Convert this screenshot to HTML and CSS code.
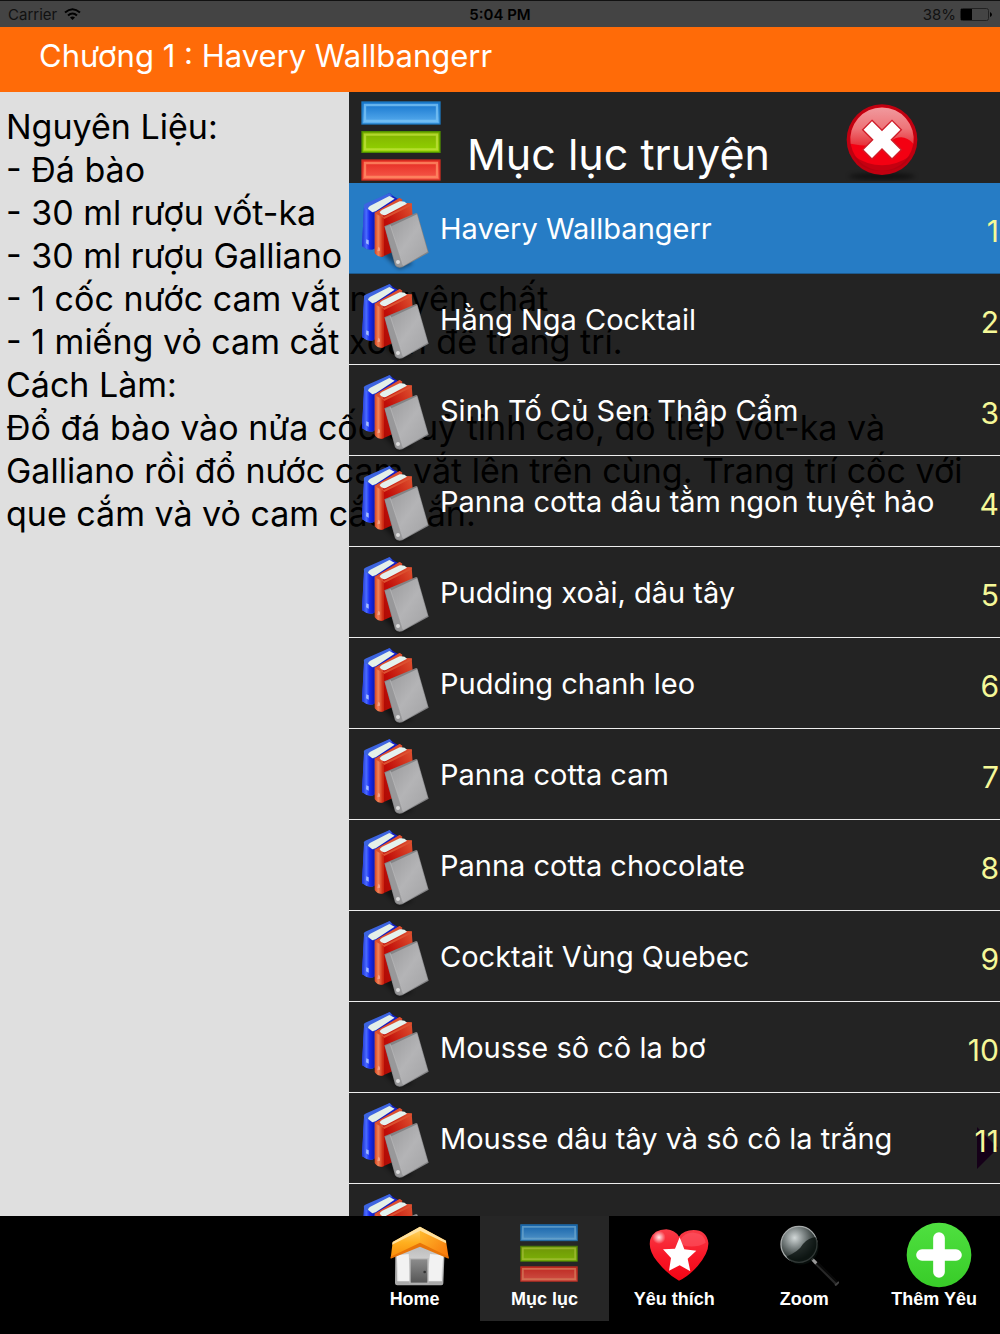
FILE: index.html
```html
<!DOCTYPE html>
<html lang="vi">
<head>
<meta charset="utf-8">
<meta name="viewport" content="width=device-width, initial-scale=1">
<title>Chương 1 : Havery Wallbangerr</title>
<link rel="stylesheet" href="styles.css">
</head>
<body>
<svg class="defs" aria-hidden="true">
  <defs>
    <linearGradient id="blueSpine"><stop offset="0" stop-color="#1c2fd0"/><stop offset=".35" stop-color="#4a6cff"/><stop offset=".6" stop-color="#1a2df0"/><stop offset="1" stop-color="#0c18b8"/></linearGradient>
    <linearGradient id="redSpine"><stop offset="0" stop-color="#d8401c"/><stop offset=".4" stop-color="#f08458"/><stop offset="1" stop-color="#cc1c08"/></linearGradient>
    <linearGradient id="redCover" x1="0" y1="1" x2="1" y2="0"><stop offset="0" stop-color="#a80c04"/><stop offset=".45" stop-color="#c00c08"/><stop offset="1" stop-color="#e25a34"/></linearGradient>
    <linearGradient id="greyCover" x1="0" y1="0" x2="1" y2="1"><stop offset="0" stop-color="#9a9a9c"/><stop offset=".5" stop-color="#b4b4b6"/><stop offset="1" stop-color="#a2a2a4"/></linearGradient>
    <linearGradient id="barBlue" x2="0" y2="1"><stop offset="0" stop-color="#1272cc"/><stop offset="1" stop-color="#5cb0f0"/></linearGradient>
    <linearGradient id="barGreen" x2="0" y2="1"><stop offset="0" stop-color="#80b000"/><stop offset="1" stop-color="#92d400"/></linearGradient>
    <linearGradient id="barRed" x2="0" y2="1"><stop offset="0" stop-color="#e42820"/><stop offset="1" stop-color="#f85c4c"/></linearGradient>
    <linearGradient id="gloss" x2="0" y2="1"><stop offset="0" stop-color="#f09a9e"/><stop offset=".55" stop-color="#ee7478"/><stop offset="1" stop-color="#e63038"/></linearGradient>
    <linearGradient id="roof" x2="0" y2="1"><stop offset="0" stop-color="#ffd878"/><stop offset=".5" stop-color="#ffb020"/><stop offset="1" stop-color="#f88a08"/></linearGradient>
    <linearGradient id="roofRight" x2="1" y2="1"><stop offset="0" stop-color="#ffc030"/><stop offset="1" stop-color="#f87408"/></linearGradient>
    <linearGradient id="wall" x2="0" y2="1"><stop offset="0" stop-color="#b4b4b4"/><stop offset="1" stop-color="#ececec"/></linearGradient>
    <linearGradient id="door" x2="0" y2="1"><stop offset="0" stop-color="#8c8c8c"/><stop offset="1" stop-color="#565656"/></linearGradient>
    <linearGradient id="heart" x2="0" y2="1"><stop offset="0" stop-color="#f83c48"/><stop offset=".5" stop-color="#f81828"/><stop offset="1" stop-color="#f40414"/></linearGradient>
    <radialGradient id="shine"><stop offset="0" stop-color="#fff" stop-opacity=".9"/><stop offset="1" stop-color="#fff" stop-opacity="0"/></radialGradient>
    <radialGradient id="lens" cx=".38" cy=".32" r=".62"><stop offset="0" stop-color="#d2d8d8"/><stop offset=".45" stop-color="#7c8484"/><stop offset="1" stop-color="#1c2422"/></radialGradient>
    <linearGradient id="plus" x2="0" y2="1"><stop offset="0" stop-color="#4fe040"/><stop offset="1" stop-color="#38cc28"/></linearGradient>
    <filter id="soft" x="-50%" y="-50%" width="200%" height="200%"><feGaussianBlur stdDeviation="6"/></filter>
  </defs>
  <symbol id="books" viewBox="0 9 273 273">
    <path d="M85 205L112 232L150 268L190 252L150 200Z" fill="#000" opacity=".45" filter="url(#soft)"/>
    <path d="M45 80L122 39L131 47L156 62L110 140L76 206Q58 214 39 198Z" fill="#1420c4"/>
    <path d="M45 80Q42 74 52 70L122 39L130 49L60 84L76 97V206Q58 214 39 198Z" fill="#3c64e0"/>
    <path d="M46 84L76 98V206Q58 214 39 198Z" fill="url(#blueSpine)"/>
    <path d="M57 86Q58 80 64 77L121 48L137 56L80 94L70 97Z" fill="#e4f0e8"/>
    <path d="M52 178L59 181V194L51 190Z" fill="#a4bcff"/>
    <path d="M78 98L152 54L160 59L158 68L188 70L192 122L140 212L98 231L78 220Z" fill="url(#redCover)"/>
    <path d="M77 98L152 54L160 60L96 95L104 111L188 70L189 76L104 118V229L78 219Z" fill="#dc5030"/>
    <path d="M78 100L104 114V228Q90 236 77 219Z" fill="url(#redSpine)"/>
    <path d="M92 97Q94 92 100 89L152 64Q166 62 174 71L112 104Q98 110 92 97Z" fill="#e4f2ee"/>
    <path d="M88 200Q94 202 93 212L85 214Z" fill="#f4a488"/>
    <path d="M106 139L201 99Q205 99 206 103L239 218L160 262Q144 266 138 256Z" fill="#848486"/>
    <path d="M124 140L204 103L236 215L163 258Z" fill="url(#greyCover)"/>
    <path d="M108 141L124 134L162 258Q146 264 140 254Z" fill="#98989a"/>
    <path d="M124 136L162 256" stroke="#bcbcbe" stroke-width="2" fill="none"/>
    <circle cx="147" cy="246" r="6" fill="#dcdcdc"/>
  </symbol>
  <symbol id="bars" viewBox="0 0 240 240">
    <g stroke-width="4">
      <rect x="3" y="3" width="234" height="66" fill="url(#barBlue)" stroke="#1c78c0"/>
      <rect x="3" y="92" width="234" height="62" fill="url(#barGreen)" stroke="#509000"/>
      <rect x="3" y="177" width="234" height="60" fill="url(#barRed)" stroke="#cc2c20"/>
    </g>
    <g fill="none" stroke-width="7">
      <path d="M12 12H228V60H12Z" stroke="#78c2f4" opacity=".8"/>
      <path d="M12 101H228V145H12Z" stroke="#c4e440" opacity=".7"/>
      <path d="M12 186H228V228H12Z" stroke="#ff8c64" opacity=".8"/>
    </g>
  </symbol>
</svg>

<div class="status">
  <span class="carrier">Carrier
    <svg width="17" height="12" viewBox="0 0 17 12"><g fill="none" stroke="#000" stroke-width="2"><path d="M1 4.500Q8.500 -2 16 4.500"/><path d="M4 7.500Q8.500 3.500 13 7.500"/></g><path d="M6 9.500Q8.500 7.500 11 9.500L8.500 12Z"/></svg>
  </span>
  <time class="clock">5:04 PM</time>
  <span class="battery">38%
    <svg width="32" height="13" viewBox="0 0 32 13"><rect x=".5" y=".5" width="28" height="12" rx="2" fill="none" stroke="#222"/><path d="M1 1H12V12H1ZM30 4Q32 5 32 6.500T30 9Z"/></svg>
  </span>
</div>

<header class="titlebar"><h1>Chương 1 : Havery Wallbangerr</h1></header>

<main class="stage">
  <article class="recipe">
    <p>Nguyên Liệu:<br>- Đá bào<br>- 30 ml rượu vốt-ka<br>- 30 ml rượu Galliano<br>- 1 cốc nước cam vắt nguyên chất<br>- 1 miếng vỏ cam cắt xoắn để trang trí.</p>
    <p>Cách Làm:<br>Đổ đá bào vào nửa cốc thuỷ tinh cao, đổ tiếp vốt-ka và<br>Galliano rồi đổ nước cam vắt lên trên cùng. Trang trí cốc với<br>que cắm và vỏ cam cắt xoắn.</p>
  </article>
  <button class="next" type="button"><svg width="21" height="42" viewBox="0 0 21 42"><path d="M0 0L21 21L0 42Z" fill="#85009a"/></svg></button>

  <aside class="panel">
    <div class="panel-head">
      <svg class="panel-icon"><use href="#bars"/></svg>
      <h2>Mục lục truyện</h2>
      <button class="close" type="button">
        <svg width="80" height="80" viewBox="0 0 240 240">
          <ellipse cx="120" cy="226" rx="100" ry="10" fill="#000" opacity=".5" filter="url(#soft)"/>
          <circle cx="120" cy="116" r="106" fill="#c00010"/>
          <circle cx="120" cy="114" r="95" fill="#f40012"/>
          <path d="M26 128A95 95 0 1 1 214 128Q190 100 160 112Q110 146 26 128Z" fill="url(#gloss)"/>
          <path d="M34 164Q120 222 206 164Q182 210 120 210T34 164Z" fill="#b00010" opacity=".7"/>
          <path d="M90 58L120 88L150 58L178 86L148 116L178 146L150 174L120 144L90 174L62 146L92 116L62 86Z" fill="#fff" stroke="#d01c28" stroke-width="4"/>
        </svg>
      </button>
    </div>
    <ol class="chapters">
      <li class="current"><a href="#1"><svg><use href="#books"/></svg><span class="name">Havery Wallbangerr</span><span class="num">1</span></a></li>
      <li><a href="#2"><svg><use href="#books"/></svg><span class="name">Hằng Nga Cocktail</span><span class="num">2</span></a></li>
      <li><a href="#3"><svg><use href="#books"/></svg><span class="name">Sinh Tố Củ Sen Thập Cẩm</span><span class="num">3</span></a></li>
      <li><a href="#4"><svg><use href="#books"/></svg><span class="name">Panna cotta dâu tằm ngon tuyệt hảo</span><span class="num">4</span></a></li>
      <li><a href="#5"><svg><use href="#books"/></svg><span class="name">Pudding xoài, dâu tây</span><span class="num">5</span></a></li>
      <li><a href="#6"><svg><use href="#books"/></svg><span class="name">Pudding chanh leo</span><span class="num">6</span></a></li>
      <li><a href="#7"><svg><use href="#books"/></svg><span class="name">Panna cotta cam</span><span class="num">7</span></a></li>
      <li><a href="#8"><svg><use href="#books"/></svg><span class="name">Panna cotta chocolate</span><span class="num">8</span></a></li>
      <li><a href="#9"><svg><use href="#books"/></svg><span class="name">Cocktait Vùng Quebec</span><span class="num">9</span></a></li>
      <li><a href="#10"><svg><use href="#books"/></svg><span class="name">Mousse sô cô la bơ</span><span class="num">10</span></a></li>
      <li><a href="#11"><svg><use href="#books"/></svg><span class="name">Mousse dâu tây và sô cô la trắng</span><span class="num">11</span></a></li>
      <li><a href="#12"><svg><use href="#books"/></svg></a></li>
    </ol>
  </aside>
</main>

<nav class="tabbar">
  <button class="tab" type="button">
    <svg width="60" height="66" viewBox="0 0 180 198">
      <path d="M16 84L92 50L164 84L160 184Q160 190 154 190H22Q15 190 15 184Z" fill="#aaa"/>
      <path d="M18 88L92 56L162 88L156 178H22Z" fill="url(#wall)"/>
      <path d="M20 100L56 96L62 176H26ZM160 100L120 96L112 176H152Z" fill="#f2f2f2"/>
      <rect x="58" y="108" width="58" height="76" fill="#bdbdbd"/>
      <rect x="62" y="112" width="50" height="70" fill="url(#door)"/>
      <circle cx="104" cy="150" r="4" fill="#333"/>
      <path d="M90 14L8 60L2 108L90 70Z" fill="url(#roof)"/>
      <path d="M90 14L168 56L176 108L90 70Z" fill="url(#roofRight)"/>
      <path d="M2 104L90 62L176 104V110L90 74L2 110Z" fill="#e87408"/>
      <path d="M90 14L8 60L6 68L90 26L168 64V56Z" fill="#ffe2a0"/>
    </svg>
    <span>Home</span>
  </button>
  <button class="tab active" type="button">
    <svg class="tab-bars" width="60" height="58"><use href="#bars"/></svg>
    <span>Mục lục</span>
  </button>
  <button class="tab" type="button">
    <svg width="60" height="66" viewBox="0 0 180 198">
      <path d="M90 176Q56 158 24 118Q-4 82 4 52Q14 22 52 22Q78 24 90 44Q104 24 134 24Q172 24 178 62Q180 92 146 132Q118 164 90 176Z" fill="url(#heart)"/>
      <path d="M94 54Q108 30 136 32Q166 34 170 62Q140 80 100 70Z" fill="#ff6470" opacity=".45"/>
      <circle cx="30" cy="46" r="20" fill="url(#shine)"/>
      <path d="M92 46L106 82L142 86L116 110L124 148L92 130L60 146L66 108L42 82L78 80Z" fill="#fff"/>
    </svg>
    <span>Yêu thích</span>
  </button>
  <button class="tab" type="button">
    <svg width="60" height="66" viewBox="0 0 180 198">
      <path d="M106 118L176 188" stroke="#282828" stroke-width="11"/>
      <path d="M108 116L178 184" stroke="#090909" stroke-width="6"/>
      <path d="M168 190L180 180" stroke="#444" stroke-width="5"/>
      <path d="M98 110L112 124" stroke="#999" stroke-width="9"/>
      <circle cx="60" cy="67" r="54" fill="url(#lens)" stroke="#a8acac" stroke-width="4"/>
      <path d="M110 46A52 52 0 0 1 22 104Q60 88 72 66Q90 46 110 46Z" fill="#08100e" opacity=".75"/>
    </svg>
    <span>Zoom</span>
  </button>
  <button class="tab" type="button">
    <svg width="66" height="66" viewBox="0 0 198 198">
      <circle cx="99" cy="99" r="97" fill="url(#plus)"/>
      <path d="M99 48V150M48 99H150" stroke="#fff" stroke-width="35" stroke-linecap="round"/>
    </svg>
    <span>Thêm Yêu</span>
  </button>
</nav>
</body>
</html>
```

FILE: styles.css
```css
* { box-sizing: border-box; }

body {
  margin: 0;
  height: 100vh;
  display: flex;
  flex-direction: column;
  overflow: hidden;
  background: #000;
  color: #000;
  font-family: Inter, "Liberation Sans", sans-serif;
}

h1, h2, p, ol { margin: 0; padding: 0; font-weight: 400; }
button { border: 0; padding: 0; background: none; color: inherit; font: inherit; cursor: pointer; }
svg { display: block; flex: none; }
.defs { position: absolute; width: 0; height: 0; }

.status {
  display: grid;
  grid-template-columns: 1fr auto 1fr;
  align-items: center;
  height: 27px;
  padding: 0 8px;
  border-top: 1px solid #111;
  background: #444;
  font-size: 15px;
}
.carrier, .battery { display: flex; align-items: center; gap: 7px; color: #111; }
.battery { justify-content: flex-end; gap: 4px; }
.clock { font-weight: 600; }

.titlebar { height: 65px; padding: 8px 39px; background: #ff6b08; color: #fff; }
.titlebar h1 { font-size: 31px; line-height: 42px; }

.stage { position: relative; flex: 1; min-height: 0; overflow: hidden; background: #dfdfdf; }
.recipe { padding: 13px 6px; font-size: 34px; line-height: 43px; white-space: nowrap; }
.next { position: absolute; right: 2px; bottom: 47px; }

.panel {
  position: absolute;
  inset: 0 0 0 auto;
  width: 65.1%;
  display: flex;
  flex-direction: column;
  background: rgba(0, 0, 0, .843);
  color: #fff;
}
.panel-head { display: flex; align-items: flex-start; height: 91px; padding: 9px 78px 0 12px; }
.panel-icon { width: 80px; height: 80px; }
.panel-head h2 { flex: 1; padding: 25px 0 0 26px; font-size: 43px; line-height: 56px; }

.chapters { flex: 1; min-height: 0; overflow: hidden; list-style: none; }
.chapters a {
  display: flex;
  align-items: center;
  height: 91px;
  border-bottom: 1px solid #eee;
  color: #fff;
  text-decoration: none;
}
.chapters .current a { background: #267cc5; border-color: #1d5a8e; }
.chapters svg { width: 91px; height: 91px; }
.name { flex: 1; padding-top: 2px; font-size: 29px; line-height: 40px; }
.num { padding: 6px 1px 0 0; color: #f5f898; font-size: 30px; line-height: 40px; }

.tabbar { display: flex; justify-content: flex-end; height: 118px; padding: 0 1px 13px 0; background: #000; color: #fff; }
.tab {
  display: flex;
  flex-direction: column;
  align-items: center;
  width: 13%;
  padding-top: 6px;
  font-family: "Liberation Sans", Arial, sans-serif;
  font-size: 18px;
  font-weight: 700;
  line-height: 22px;
}
.tab svg { margin: 0 0 0 10px; }
.tab .tab-bars { margin: 2px 0 6px 10px; opacity: .8; }
.tab.active { background: #262626; }
```
